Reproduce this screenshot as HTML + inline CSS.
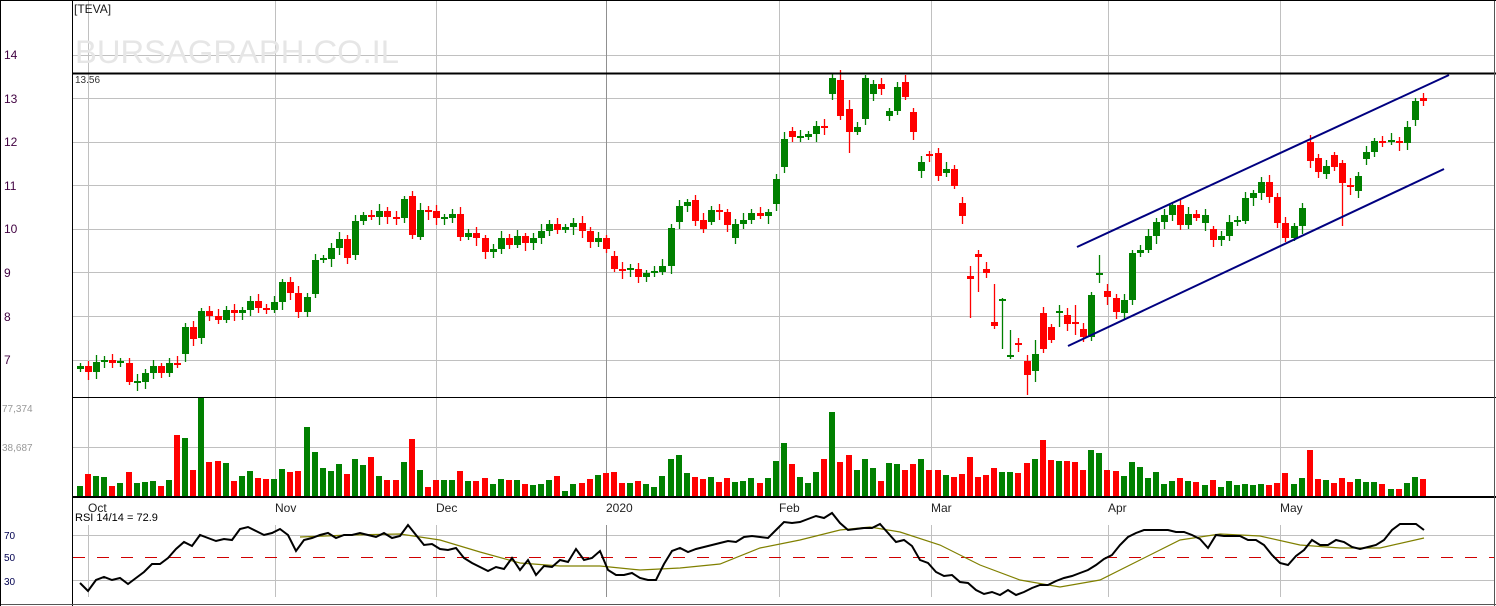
<!DOCTYPE html>
<html><head><meta charset="utf-8"><style>
html,body{margin:0;padding:0;background:#fff;width:1496px;height:606px;overflow:hidden}
svg{display:block;font-family:"Liberation Sans",Arial,sans-serif}
</style></head><body>
<svg id="s" width="1496" height="606" xmlns="http://www.w3.org/2000/svg">
<rect x="0" y="0" width="1496" height="606" fill="#fff"/>
<g id="grid"></g>
<text x="75" y="63" font-size="32" fill="#e6e6e6" textLength="324" lengthAdjust="spacingAndGlyphs">BURSAGRAPH.CO.IL</text>
<text x="74" y="13" font-size="12" fill="#1a1a1a">[TEVA]</text>
<text x="75" y="83" font-size="10" fill="#333">13.56</text>
<g id="vol"></g>
<g id="cand"></g>
<line x1="1077" y1="247" x2="1449" y2="75" stroke="#000080" stroke-width="2"/>
<line x1="1068" y1="346" x2="1444" y2="169" stroke="#000080" stroke-width="2"/>
<line x1="73" y1="73.5" x2="1496" y2="73.5" stroke="#000" stroke-width="2"/>
<line x1="73" y1="397.5" x2="1496" y2="397.5" stroke="#000" stroke-width="1"/>
<line x1="73" y1="497" x2="1496" y2="497" stroke="#000" stroke-width="2"/>
<line x1="72.5" y1="0" x2="72.5" y2="606" stroke="#000" stroke-width="1"/>
<line x1="1494.5" y1="0" x2="1494.5" y2="606" stroke="#555" stroke-width="1"/>
<line x1="0" y1="604.5" x2="1496" y2="604.5" stroke="#555" stroke-width="1"/>
<line x1="0.5" y1="0" x2="0.5" y2="606" stroke="#000" stroke-width="1"/>
<line x1="0" y1="0.5" x2="1496" y2="0.5" stroke="#000" stroke-width="1"/>
<g font-size="12" fill="#400040">
<text x="4" y="59">14</text><text x="4" y="103">13</text><text x="4" y="146">12</text><text x="4" y="190">11</text>
<text x="4" y="233">10</text><text x="4" y="277">9</text><text x="4" y="321">8</text><text x="4" y="364">7</text>
</g>
<g font-size="10" fill="#999"><text x="2" y="412">77,374</text><text x="2" y="451">38,687</text></g>
<g font-size="10" fill="#000050"><text x="4" y="539">70</text><text x="4" y="561">50</text><text x="4" y="585">30</text></g>
<g font-size="12" fill="#222">
<text x="88" y="512">Oct</text><text x="275" y="512">Nov</text><text x="436" y="512">Dec</text><text x="606" y="512">2020</text>
<text x="779" y="512">Feb</text><text x="931" y="512">Mar</text><text x="1108" y="512">Apr</text><text x="1280" y="512">May</text>
</g>
<text x="75" y="521" font-size="11" fill="#000">RSI 14/14 = 72.9</text>
<line x1="73" y1="557.5" x2="1494" y2="557.5" stroke="#d00000" stroke-width="1" stroke-dasharray="12,12"/>
<polyline id="ma" fill="none" stroke="#808000" stroke-width="1.2"/>
<polyline id="rsi" fill="none" stroke="#000" stroke-width="2"/>
</svg>
<script>
var NS="http://www.w3.org/2000/svg";
function el(p,t,a){var e=document.createElementNS(NS,t);for(var k in a)e.setAttribute(k,a[k]);document.getElementById(p).appendChild(e);return e;}
[55,98,142,185,229,272,316,360,447,535,580].forEach(function(y){el("grid","line",{x1:73,x2:1494,y1:y+.5,y2:y+.5,stroke:"#c0c0c0"});});
[88,275,436,606,779,931,1108,1280].forEach(function(x){
 var c=x==606?"#909090":"#c0c0c0";
 el("grid","line",{x1:x+.5,x2:x+.5,y1:0,y2:497,stroke:c});
 el("grid","line",{x1:x+.5,x2:x+.5,y1:525,y2:597,stroke:c});
});
var C=[366,372,362,360,363,362,382,382,373,366,373,363,364,327,339,311,316,320,310,313,310,301,308,310,302,282,293,312,297,260,259,248,239,258,221,215,217,211,217,218,199,235,210,211,218,
218,214,237,233,238,252,249,238,245,236,243,238,231,224,230,227,223,231,242,238,249,269,270,269,277,273,272,266,228,206,202,221,229,210,212,225,224,220,213,216,212,179,139,137,137,134,126,127,78,116,132,127,78,84,89,111,87,97,132,162,155,176,169,186,
216,279,257,273,326,300,355,345,375,354,349,340,312,324,323,337,295,274,297,312,300,253,250,236,222,215,205,225,214,218,215,240,236,222,221,198,193,182,197,223,238,226,208,161,172,166,167,183,186,176,152,141,142,141,143,127,101,101];
var O={6:363,13:354,15:338,29:294,34:255,41:196,42:237,66:256,73:266,74:222,76:200,77:220,78:222,81:238,86:204,87:167,88:131,
93:94,94:80,95:109,96:132,97:119,98:94,100:116,102:82,103:112,104:171,105:154,106:153,107:173,
109:203,110:276,111:254,112:269,113:322,114:301,115:357,116:343,117:361,118:371,119:313,120:327,121:313,122:315,123:322,124:329,126:275,127:291,128:298,129:313,
139:223,140:229,152:142,153:158,154:174,155:155,156:163,157:185,158:191,159:159,165:120,166:98};
var W={110:[266,318],111:[250,292],113:[284,329],114:[298,349],115:[330,359],117:[355,395],118:[340,382],121:[305,327],123:[305,335],126:[255,283],156:[160,226],97:[75,125],94:[70,120],95:[100,153]};
var V=[11,23,21,20,11,14,25,14,15,16,11,17,62,59,27,99,35,36,34,16,21,26,19,18,18,28,25,26,70,45,29,26,33,23,38,32,40,21,17,17,35,58,
27,10,17,17,17,26,16,16,19,13,18,17,17,13,12,13,17,21,6,13,14,18,22,24,25,14,14,16,13,10,21,38,42,24,20,18,20,15,19,15,16,19,14,19,36,54,33,20,14,25,38,85,35,42,27,38,29,16,34,33,27,33,38,27,27,22,
20,23,40,20,22,29,25,25,24,34,38,57,37,36,36,35,27,47,44,27,26,21,35,30,19,25,13,16,19,16,15,12,17,10,16,12,13,12,13,12,14,24,13,19,47,18,17,14,19,15,18,15,15,13,8,8,14,20,18];
var G="#008000",R="#ff0000";
for(var i=0;i<C.length;i++){
 var x=Math.round(80+8.09*i);
 var o=(O[i]!==undefined)?O[i]:(i?C[i-1]:C[0]+3), c=C[i];
 var up=c<=o, col=up?G:R;
 var t=Math.min(o,c),b=Math.max(o,c); if(b-t<2){t=c-1;b=c+1;}
 var w=3+((i*7)%5), w2=3+((i*11)%6);
 var wt=t-w, wb=b+w2; if(W[i]){wt=W[i][0];wb=W[i][1];}
 el("cand","line",{x1:x+.5,x2:x+.5,y1:wt,y2:wb,stroke:col,"stroke-width":1.3});
 el("cand","rect",{x:x-3,y:t,width:7,height:b-t,fill:col});
 var h=V[i]||10;
 el("vol","rect",{x:x-3,y:497-h,width:6,height:h,fill:col});
}
var rsi="80,583 88,591 96,580 104,577 112,580 120,578 128,584 136,578 144,572 152,564 160,564 168,558 176,549 184,542 192,546 200,535 208,538 216,541 224,539 232,540 240,529 248,527 256,531 264,535 272,533 280,529 288,535 296,551 304,540 312,538 320,535 328,533 336,538 344,535 352,535 360,533 368,535 376,537 384,533 392,538 400,536 408,525 416,535 424,545 432,544 440,549 448,550 456,548 464,558 472,563 480,567 488,571 496,567 504,569 512,558 520,570 528,560 536,575 544,566 552,567 560,560 568,562 576,549 584,560 592,558 600,551 608,570 616,575 624,575 632,573 640,578 648,580 656,580 664,564 672,551 680,548 688,552 696,549 704,547 712,545 720,543 728,541 736,542 744,537 752,536 760,537 768,538 776,530 784,522 792,523 800,522 808,519 816,516 824,518 832,513 840,523 848,530 856,529 864,528 872,528 880,524 888,533 896,542 904,540 912,546 920,560 928,563 936,572 944,576 952,575 960,582 968,583 976,590 984,594 992,592 1000,595 1008,590 1016,595 1024,592 1032,588 1040,585 1048,585 1056,581 1064,578 1072,576 1080,573 1088,570 1096,565 1104,559 1112,555 1120,545 1128,537 1136,533 1144,530 1152,530 1160,530 1168,530 1176,532 1184,532 1192,535 1200,539 1208,548 1216,535 1224,536 1232,536 1240,536 1248,540 1256,540 1264,545 1272,555 1280,563 1288,565 1296,556 1304,550 1312,540 1320,545 1328,545 1336,540 1344,542 1352,547 1360,549 1368,547 1376,545 1384,540 1392,530 1400,524 1408,524 1416,524 1424,530";
document.getElementById("rsi").setAttribute("points",rsi);
document.getElementById("ma").setAttribute("points","300,537 350,535 400,534 440,540 480,552 520,563 560,566 600,566 640,570 680,568 720,564 760,548 800,540 840,530 870,527 900,532 940,545 980,565 1020,580 1060,587 1100,580 1140,560 1180,540 1220,534 1260,536 1300,545 1340,548 1380,548 1424,538");
</script>
</body></html>
